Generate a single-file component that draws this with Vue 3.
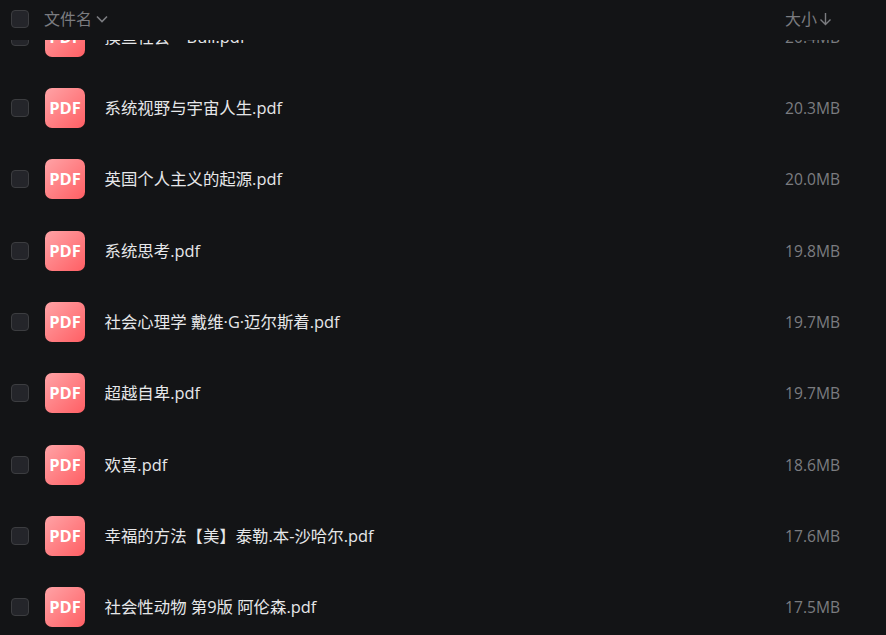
<script setup>
const files = [
  { name: '摸鱼社会一Bull.pdf', size: '20.4MB' },
  { name: '系统视野与宇宙人生.pdf', size: '20.3MB' },
  { name: '英国个人主义的起源.pdf', size: '20.0MB' },
  { name: '系统思考.pdf', size: '19.8MB' },
  { name: '社会心理学 戴维·G·迈尔斯着.pdf', size: '19.7MB' },
  { name: '超越自卑.pdf', size: '19.7MB' },
  { name: '欢喜.pdf', size: '18.6MB' },
  { name: '幸福的方法【美】泰勒.本-沙哈尔.pdf', size: '17.6MB' },
  { name: '社会性动物 第9版 阿伦森.pdf', size: '17.5MB' },
]
</script>

<template>
  <div class="page">
    <div class="header">
      <span class="check"></span>
      <span class="head-name">文件名
        <svg width="12" height="12" viewBox="0 0 12 12"><path d="M1 3.5 6 8.5l5-5" fill="none" stroke="currentColor" stroke-width="1.6"/></svg>
      </span>
      <span class="head-size">大小
        <svg width="13" height="14" viewBox="0 0 13 14"><path d="M6.5 1V12.5M1.5 7.5 6.5 12.5 11.5 7.5" fill="none" stroke="currentColor" stroke-width="1.4"/></svg>
      </span>
    </div>
    <div class="list">
      <div class="rows">
        <div v-for="f in files" :key="f.name" class="row">
          <span class="check"></span>
          <span class="pdf">PDF</span>
          <span class="name">{{ f.name }}</span>
          <span class="size">{{ f.size }}</span>
        </div>
      </div>
    </div>
  </div>
</template>

<style>
html, body { margin: 0; background: #131416; }
</style>

<style scoped>
.page {
  width: 886px;
  height: 635px;
  overflow: hidden;
  display: flex;
  flex-direction: column;
  background: #131416;
  font-family: "Open Sans", "Noto Sans", "Noto Sans CJK SC", sans-serif;
}
.header {
  height: 40px;
  flex: none;
  display: flex;
  align-items: center;
  padding-left: 11px;
  padding-bottom: 3px;
  box-sizing: border-box;
  color: #7b7c80;
  font-size: 16px;
}
.head-name {
  margin-left: 15px;
  display: flex;
  align-items: center;
  gap: 4px;
  line-height: 20px;
}
.head-size {
  margin-left: auto;
  margin-right: 54px;
  display: flex;
  align-items: center;
  gap: 2px;
  line-height: 20px;
}
.check {
  width: 16px;
  height: 16px;
  flex: none;
  border: 1px solid #3c3d40;
  border-radius: 4px;
  background: #24252a;
}
.list {
  flex: 1;
  overflow: hidden;
}
.rows {
  margin-top: -38.7px;
}
.row {
  height: 71.28px;
  display: flex;
  align-items: center;
  padding-left: 11px;
}
.pdf {
  width: 40px;
  height: 40px;
  flex: none;
  margin-left: 16px;
  border-radius: 7px;
  background: linear-gradient(135deg, #ffa3a6, #ff5f64);
  color: #fff;
  font-size: 16.5px;
  font-weight: 700;
  line-height: 20px;
  display: flex;
  align-items: center;
  justify-content: center;
}
.name {
  margin-left: 19.6px;
  color: #e6e7e9;
  font-size: 16.4px;
  line-height: 22px;
}
.size {
  margin-left: auto;
  margin-right: 46px;
  color: #7b7c80;
  font-size: 15.6px;
  line-height: 20px;
}
</style>
